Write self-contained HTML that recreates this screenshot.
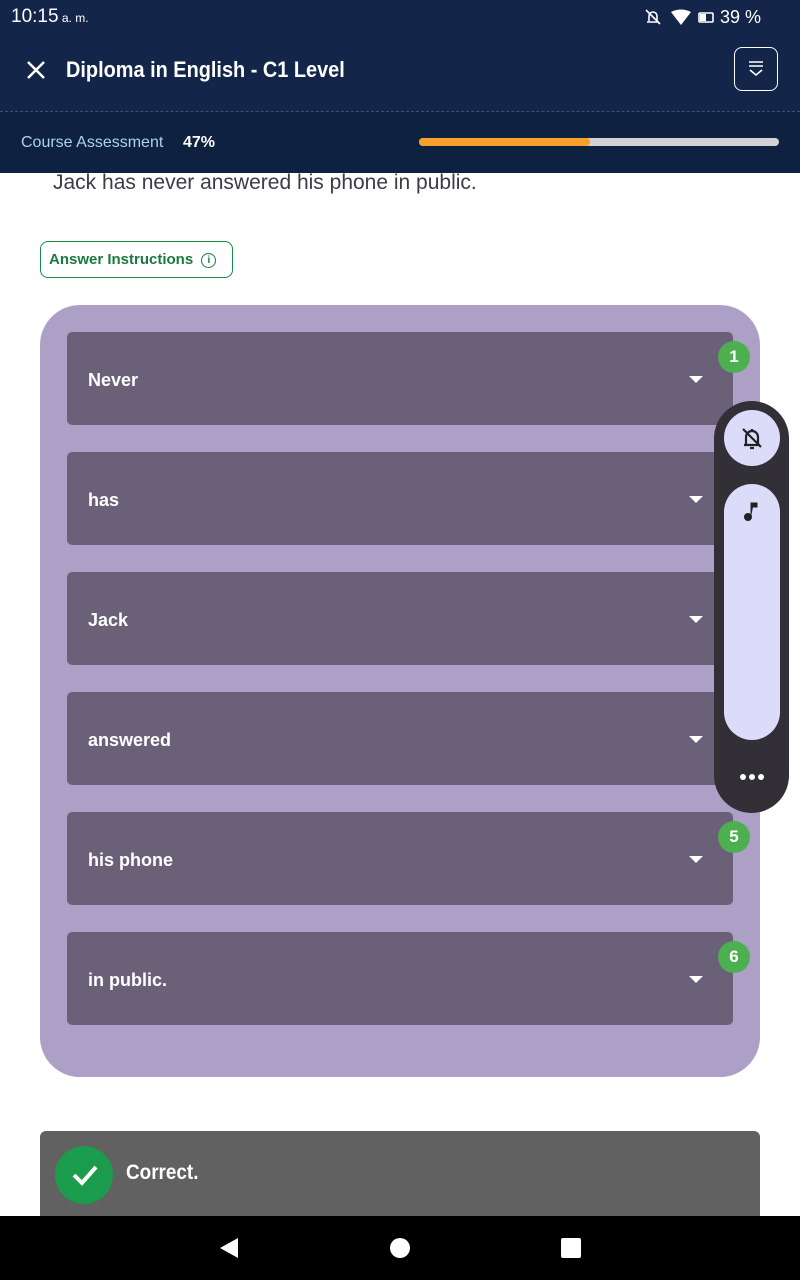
<!DOCTYPE html><html><head><style>
body{margin:0;width:800px;height:1280px;position:relative;overflow:hidden;background:#fff;font-family:"Liberation Sans",Roboto,sans-serif}
.a{position:absolute}
.row{position:absolute;left:67px;width:666px;height:93px;background:#6a6178;border-radius:5px;color:#fff;font-weight:bold;font-size:18px}
.row span{position:absolute;left:21px;top:38px}
.row i{position:absolute;right:30px;top:44px;width:0;height:0;border-left:7px solid transparent;border-right:7px solid transparent;border-top:7px solid #fff}
.b{position:absolute;left:718px;width:32px;height:32px;border-radius:50%;background:#4caf50;color:#fff;font-weight:bold;font-size:17px;text-align:center;line-height:32px}
</style></head><body>
<div class="a" style="left:0;top:0;width:800px;height:111px;background:#13264a"></div>
<div class="a" style="left:0;top:111px;width:800px;height:61px;background:#0e2140;border-top:1px dashed #2a5a80"></div>
<div class="a" style="left:11px;top:6px;color:#fff;font-size:19px">10:15<span style="font-size:12px"> a. m.</span></div>
<div class="a" style="left:720px;top:7px;color:#fff;font-size:18px">39 %</div>
<svg class="a" style="left:643px;top:7px" width="75" height="20"><path d="M4 15h12M6 14V9a4 4 0 018 0v5M3 3l14 14" stroke="#fff" stroke-width="1.6" fill="none"/><path d="M28 5q10-5 20 0l-10 13z" fill="#fff"/><rect x="56" y="6" width="14" height="9" rx="1" fill="none" stroke="#fff" stroke-width="1.6"/><rect x="57" y="7" width="6" height="7" fill="#fff"/></svg>
<svg class="a" style="left:26px;top:60px" width="20" height="20"><path d="M2 2l16 16M18 2L2 18" stroke="#fff" stroke-width="2.5"/></svg>
<div class="a" style="left:66px;top:57px;color:#fff;font-size:22px;font-weight:bold;transform:scaleX(0.905);transform-origin:0 0;white-space:nowrap">Diploma in English - C1 Level</div>
<div class="a" style="left:734px;top:47px;width:42px;height:42px;border:1.5px solid #fff;border-radius:8px"></div>
<svg class="a" style="left:747px;top:60px" width="18" height="18"><path d="M2 2h14M2 6h14M3 10l6 5 6-5" stroke="#fff" stroke-width="1.6" fill="none"/></svg>
<div class="a" style="left:21px;top:134px;color:#a9d3ee;font-size:16px;white-space:nowrap"><span style="display:inline-block;width:150px">Course Assessment</span><b style="color:#fff;margin-left:12px">47%</b></div>
<div class="a" style="left:419px;top:138px;width:360px;height:8px;border-radius:4px;background:#d3d3d3"></div>
<div class="a" style="left:419px;top:138px;width:171px;height:8px;border-radius:4px;background:#f7a02a"></div>
<div class="a" style="left:53px;top:171px;color:#3c3c48;font-size:21px;white-space:nowrap">Jack has never answered his phone in public.</div>
<div class="a" style="left:40px;top:241px;width:193px;height:37px;border:1.5px solid #1a8a48;border-radius:8px;color:#1a7a40;font-size:15px;font-weight:bold;line-height:35px;padding-left:8px;box-sizing:border-box">Answer Instructions <span style="display:inline-block;width:13px;height:13px;border:1.5px solid #1a7a40;border-radius:50%;font-size:10px;line-height:13px;text-align:center;margin-left:4px;vertical-align:1px">i</span></div>
<div class="a" style="left:40px;top:305px;width:720px;height:772px;background:#aca0c6;border-radius:40px"></div>
<div class="row" style="top:332px"><span>Never</span><i></i></div>
<div class="row" style="top:452px"><span>has</span><i></i></div>
<div class="row" style="top:572px"><span>Jack</span><i></i></div>
<div class="row" style="top:692px"><span>answered</span><i></i></div>
<div class="row" style="top:812px"><span>his phone</span><i></i></div>
<div class="row" style="top:932px"><span>in public.</span><i></i></div>
<div class="b" style="top:341px">1</div><div class="b" style="top:821px">5</div><div class="b" style="top:941px">6</div>
<div class="a" style="left:714px;top:401px;width:75px;height:412px;background:#323036;border-radius:38px"></div>
<div class="a" style="left:724px;top:410px;width:56px;height:56px;border-radius:50%;background:#dcdcfa"></div>
<svg class="a" style="left:738px;top:424px" width="28" height="28"><path d="M6 21h16M8 20v-7a6 6 0 0112 0v7M12 24h4M14 5v3M5 5l18 18" stroke="#222" stroke-width="2.2" fill="none"/></svg>
<div class="a" style="left:724px;top:484px;width:56px;height:256px;border-radius:28px;background:#dcdcfa"></div>
<svg class="a" style="left:742px;top:500px" width="16" height="24"><circle cx="6" cy="17" r="4" fill="#222"/><path d="M9 17V3h6v4h-4" fill="#222" stroke="#222" stroke-width="1"/></svg>
<svg class="a" style="left:738px;top:770px" width="28" height="14"><circle cx="5" cy="7" r="3" fill="#fff"/><circle cx="14" cy="7" r="3" fill="#fff"/><circle cx="23" cy="7" r="3" fill="#fff"/></svg>
<div class="a" style="left:40px;top:1131px;width:720px;height:85px;background:#616161;border-radius:6px 6px 0 0"></div>
<div class="a" style="left:55px;top:1146px;width:58px;height:58px;border-radius:50%;background:#1a9c4c"></div>
<svg class="a" style="left:70px;top:1160px" width="30" height="30"><path d="M4 15l8 8L26 7" stroke="#fff" stroke-width="4" fill="none"/></svg>
<div class="a" style="left:126px;top:1161px;color:#fff;font-size:21px;font-weight:bold;transform:scaleX(0.9);transform-origin:0 0">Correct.</div>
<div class="a" style="left:0;top:1216px;width:800px;height:64px;background:#000"></div>
<svg class="a" style="left:0;top:1216px" width="800" height="64"><path d="M238 22v20l-18-10z" fill="#fff"/><circle cx="400" cy="32" r="10" fill="#fff"/><rect x="561" y="22" width="20" height="20" rx="2" fill="#fff"/></svg>
</body></html>
